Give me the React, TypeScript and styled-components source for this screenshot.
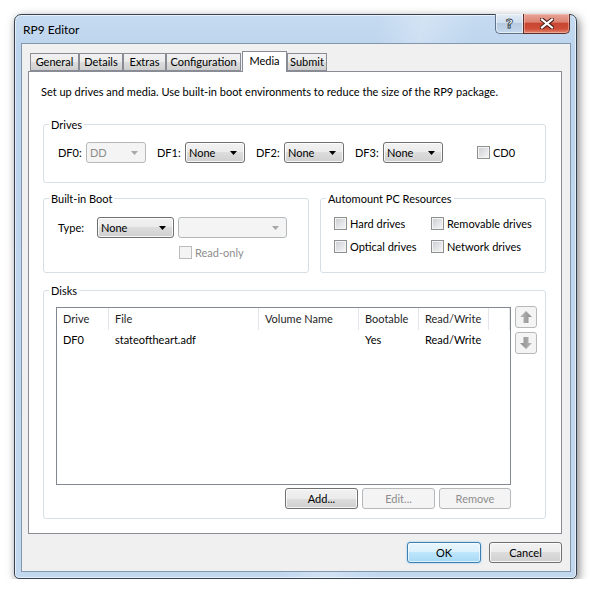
import React from 'react';
import styled, { createGlobalStyle } from 'styled-components';

const Global = createGlobalStyle`
  html, body { margin: 0; padding: 0; background: #ffffff; }
  body {
    font-family: Lato, "Liberation Sans", sans-serif;
    font-size: 11px;
    color: #000;
  }
`;

const Page = styled.div`
  padding: 14px 0 0 14px;
`;

const Frame = styled.div`
  width: 563px;
  height: 565px;
  box-sizing: border-box;
  border: 1px solid #34414f;
  border-radius: 7px 7px 5px 5px;
  background:
    linear-gradient(100deg, rgba(255,255,255,0) 55%, rgba(255,255,255,0.25) 62%, rgba(255,255,255,0) 70%),
    linear-gradient(to bottom, #c6dbf1 0%, #bcd4ed 6%, #c2d8ef 100%);
  box-shadow: 2px 3px 10px rgba(0, 0, 0, 0.5), inset 0 0 0 1px rgba(255, 255, 255, 0.6);
  padding: 0 5px 6px 6px;
  display: flex;
  flex-direction: column;
`;

const TitleBar = styled.div`
  height: 28px;
  flex: none;
  display: flex;
  align-items: center;
  padding: 0 1px 0 2px;
`;

const Title = styled.div`
  flex: 1;
  font-size: 12px;
  color: #000;
  line-height: 15px;
`;

const CaptionButtons = styled.div`
  align-self: flex-start;
  display: flex;
  margin-top: -1px;
`;

const HelpButton = styled.div`
  width: 28px;
  height: 20px;
  box-sizing: border-box;
  border: 1px solid #5f7286;
  border-top: none;
  border-right: none;
  border-radius: 0 0 0 5px;
  background: linear-gradient(#e3ecf6 0%, #cfdeee 45%, #b7cbe0 50%, #c5d8ec 100%);
  box-shadow: inset 0 0 0 1px rgba(255, 255, 255, 0.55);
  display: flex;
  align-items: center;
  justify-content: center;
  font-family: "DejaVu Sans", sans-serif;
  font-weight: bold;
  font-size: 13px;
  color: #fff;
  -webkit-text-stroke: 0.8px #2d3a48;
`;

const CloseButton = styled.div`
  width: 47px;
  height: 20px;
  box-sizing: border-box;
  border: 1px solid #5e2f2a;
  border-top: none;
  border-radius: 0 0 5px 0;
  background: linear-gradient(#e8a497 0%, #dc8373 42%, #c84631 50%, #cf4e38 78%, #e28875 100%);
  box-shadow: inset 0 0 0 1px rgba(255, 210, 200, 0.45);
  display: flex;
  align-items: center;
  justify-content: center;
`;

const Client = styled.div`
  flex: 1;
  background: #f0f0f0;
  border: 1px solid #8396ab;
  padding: 7px 8px 8px 6px;
  display: flex;
  flex-direction: column;
`;

const TabStrip = styled.div`
  height: 20px;
  flex: none;
  display: flex;
  align-items: flex-end;
  padding-left: 2px;
`;

const Tab = styled.div<{ $w: number; $active?: boolean }>`
  width: ${(p) => p.$w}px;
  height: ${(p) => (p.$active ? 21 : 18)}px;
  box-sizing: border-box;
  border: 1px solid #898c95;
  border-bottom: ${(p) => (p.$active ? 'none' : '1px solid #898c95')};
  margin-left: ${(p) => (p.$active ? 1 : 0)}px;
  margin-bottom: ${(p) => (p.$active ? -1 : 0)}px;
  position: relative;
  z-index: ${(p) => (p.$active ? 1 : 0)};
  background: ${(p) =>
    p.$active ? '#ffffff' : 'linear-gradient(#f2f2f2 0%, #ebebeb 50%, #dddddd 50%, #cfcfcf 100%)'};
  text-align: center;
  line-height: ${(p) => (p.$active ? 18 : 16)}px;
  white-space: nowrap;
`;

const Panel = styled.div`
  height: 463px;
  flex: none;
  box-sizing: border-box;
  border: 1px solid #898c95;
  background: #fff;
  padding: 0 15px 0 14px;
  display: flex;
  flex-direction: column;
`;

const Description = styled.div`
  margin: 12px 0 0 -2px;
  line-height: 15px;
  white-space: nowrap;
`;

const Group = styled.div<{ $h: number; $mt: number }>`
  position: relative;
  height: ${(p) => p.$h}px;
  margin-top: ${(p) => p.$mt}px;
  box-sizing: border-box;
  border: 1px solid #d5dfe5;
  border-radius: 3px;
`;

const Legend = styled.span`
  position: absolute;
  top: -8px;
  left: 5px;
  padding: 0 2px;
  background: #fff;
  line-height: 15px;
`;

const DrivesRow = styled.div`
  display: flex;
  align-items: center;
  padding: 17px 0 0 14px;
  height: 21px;
`;

const DriveField = styled.div`
  display: flex;
  align-items: center;
  margin-right: 11px;
`;

const FieldLabel = styled.span<{ $w: number }>`
  width: ${(p) => p.$w}px;
  line-height: 21px;
  white-space: nowrap;
`;

const ComboBox = styled.div<{ $w: number; $disabled?: boolean }>`
  width: ${(p) => p.$w}px;
  height: 21px;
  box-sizing: border-box;
  border: 1px solid ${(p) => (p.$disabled ? '#b5b9bc' : '#707070')};
  border-radius: 3px;
  background: ${(p) =>
    p.$disabled ? '#f4f4f4' : 'linear-gradient(#f2f2f2 0%, #ebebeb 50%, #dddddd 50%, #cfcfcf 100%)'};
  box-shadow: inset 0 0 0 1px ${(p) => (p.$disabled ? '#f4f4f4' : 'rgba(255,255,255,0.8)')};
  display: flex;
  align-items: center;
  padding: 0 7px 0 3px;
  color: ${(p) => (p.$disabled ? '#8d8d8d' : '#000')};
  white-space: nowrap;
`;

const ComboText = styled.span`
  flex: 1;
  line-height: 15px;
`;

const CheckRow = styled.label<{ $ml?: number; $disabled?: boolean }>`
  display: flex;
  align-items: center;
  gap: 3px;
  margin-left: ${(p) => p.$ml ?? 0}px;
  color: ${(p) => (p.$disabled ? '#8d8d8d' : '#000')};
  white-space: nowrap;
  line-height: 13px;
`;

const CheckBox = styled.span<{ $disabled?: boolean }>`
  width: 13px;
  height: 13px;
  flex: none;
  box-sizing: border-box;
  border: 1px solid ${(p) => (p.$disabled ? '#bcbcbc' : '#8e8f8f')};
  background: ${(p) =>
    p.$disabled ? '#f4f4f4' : 'linear-gradient(135deg, #c9ccd1 0%, #e3e4e6 55%, #f7f7f7 100%)'};
  box-shadow: inset 0 0 0 1px #f4f4f4;
`;

const BootRow = styled.div`
  display: flex;
  gap: 11px;
  margin-top: 15px;
`;

const BootGrid = styled.div`
  display: grid;
  grid-template-columns: 35px 77px 109px;
  column-gap: 4px;
  row-gap: 8px;
  padding: 18px 0 0 14px;
  align-items: center;
`;

const AutoGrid = styled.div`
  display: grid;
  grid-template-columns: 97px auto;
  row-gap: 10px;
  padding: 18px 0 0 13px;
`;

const DisksGrid = styled.div`
  display: grid;
  grid-template-columns: 455px 22px;
  grid-template-rows: 178px 21px;
  column-gap: 4px;
  row-gap: 3px;
  padding: 16px 0 0 12px;
`;

const ListView = styled.div`
  box-sizing: border-box;
  border: 1px solid #828790;
  background: #fff;
  overflow: hidden;
`;

const ListRow = styled.div<{ $header?: boolean }>`
  display: flex;
  height: ${(p) => (p.$header ? 22 : 19)}px;
  line-height: ${(p) => (p.$header ? 22 : 19)}px;
  color: ${(p) => (p.$header ? '#1e1e1e' : '#000')};
`;

const Cell = styled.div<{ $w: number; $header?: boolean }>`
  width: ${(p) => p.$w}px;
  flex: none;
  box-sizing: border-box;
  padding-left: 6px;
  border-right: ${(p) => (p.$header ? '1px solid #e3e6ea' : 'none')};
  white-space: nowrap;
  overflow: hidden;
`;

const ArrowColumn = styled.div`
  display: flex;
  flex-direction: column;
  gap: 4px;
  margin-top: -1px;
`;

const ArrowButton = styled.div`
  width: 22px;
  height: 22px;
  box-sizing: border-box;
  border: 1px solid #b5b9bc;
  border-radius: 3px;
  background: #f4f4f4;
  display: flex;
  align-items: center;
  justify-content: center;
`;

const ListButtons = styled.div`
  display: flex;
  justify-content: flex-end;
  gap: 4px;
`;

const PushButton = styled.div<{ $w: number; $disabled?: boolean; $default?: boolean }>`
  width: ${(p) => p.$w}px;
  height: 21px;
  box-sizing: border-box;
  border: 1px solid ${(p) => (p.$default ? '#3c7fb1' : p.$disabled ? '#b5b9bc' : '#707070')};
  border-radius: 3px;
  background: ${(p) =>
    p.$default
      ? 'linear-gradient(#eaf6fd 0%, #d9f0fc 50%, #bee6fd 50%, #a7d9f5 100%)'
      : p.$disabled
      ? '#f4f4f4'
      : 'linear-gradient(#f2f2f2 0%, #ebebeb 50%, #dddddd 50%, #cfcfcf 100%)'};
  box-shadow: ${(p) =>
    p.$default
      ? 'inset 0 0 0 1px rgba(255,255,255,0.6), 0 0 2px rgba(60,160,230,0.6)'
      : p.$disabled
      ? 'inset 0 0 0 1px #f4f4f4'
      : 'inset 0 0 0 1px rgba(255,255,255,0.8)'};
  color: ${(p) => (p.$disabled ? '#8d8d8d' : '#000')};
  display: flex;
  align-items: center;
  justify-content: center;
  line-height: 15px;
  white-space: nowrap;
`;

const DialogButtons = styled.div`
  display: flex;
  justify-content: flex-end;
  gap: 8px;
  margin-top: 8px;
`;

const DropArrow = ({ disabled }: { disabled?: boolean }) => (
  <svg width="7" height="4" viewBox="0 0 7 4">
    <polygon points="0,0 7,0 3.5,4" fill={disabled ? '#a8a8a8' : '#000'} />
  </svg>
);

const Combo = ({ w, text, disabled }: { w: number; text?: string; disabled?: boolean }) => (
  <ComboBox $w={w} $disabled={disabled}>
    <ComboText>{text}</ComboText>
    <DropArrow disabled={disabled} />
  </ComboBox>
);

const Check = ({ label, ml, disabled }: { label: string; ml?: number; disabled?: boolean }) => (
  <CheckRow $ml={ml} $disabled={disabled}>
    <CheckBox $disabled={disabled} />
    {label}
  </CheckRow>
);

const BlockArrow = ({ down }: { down?: boolean }) => (
  <svg width="14" height="14" viewBox="0 0 14 14">
    <defs>
      <linearGradient id={down ? 'ad' : 'au'} x1="0" y1="0" x2="1" y2="0">
        <stop offset="0" stopColor="#b9b9b9" />
        <stop offset="1" stopColor="#8c8c8c" />
      </linearGradient>
    </defs>
    <g transform={down ? 'rotate(180 7 7)' : undefined}>
      <path d="M7 1 L13 7 L9.5 7 L9.5 13 L4.5 13 L4.5 7 L1 7 Z" fill={`url(#${down ? 'ad' : 'au'})`} />
    </g>
  </svg>
);

const CloseGlyph = () => (
  <svg width="14" height="11" viewBox="0 0 14 11">
    <path d="M2 1.5 L12 9.5 M12 1.5 L2 9.5" stroke="#4a1c16" strokeWidth="4.2" strokeLinecap="square" />
    <path d="M2 1.5 L12 9.5 M12 1.5 L2 9.5" stroke="#ffffff" strokeWidth="2.2" strokeLinecap="square" />
  </svg>
);

const tabs: { label: string; w: number; active?: boolean }[] = [
  { label: 'General', w: 49 },
  { label: 'Details', w: 44 },
  { label: 'Extras', w: 43 },
  { label: 'Configuration', w: 75 },
  { label: 'Media', w: 45, active: true },
  { label: 'Submit', w: 40 },
];

const columns = [
  { label: 'Drive', w: 52 },
  { label: 'File', w: 150 },
  { label: 'Volume Name', w: 100 },
  { label: 'Bootable', w: 60 },
  { label: 'Read/Write', w: 70 },
  { label: '', w: 21 },
];

const rows = [['DF0', 'stateoftheart.adf', '', 'Yes', 'Read/Write', '']];

export default function App() {
  return (
    <>
      <Global />
      <Page>
        <Frame>
          <TitleBar>
            <Title>RP9 Editor</Title>
            <CaptionButtons>
              <HelpButton>?</HelpButton>
              <CloseButton>
                <CloseGlyph />
              </CloseButton>
            </CaptionButtons>
          </TitleBar>
          <Client>
            <TabStrip>
              {tabs.map((t) => (
                <Tab key={t.label} $w={t.w} $active={t.active}>
                  {t.label}
                </Tab>
              ))}
            </TabStrip>
            <Panel>
              <Description>
                Set up drives and media. Use built-in boot environments to reduce the size of the RP9 package.
              </Description>

              <Group $h={59} $mt={25}>
                <Legend>Drives</Legend>
                <DrivesRow>
                  <DriveField>
                    <FieldLabel $w={28}>DF0:</FieldLabel>
                    <Combo w={60} text="DD" disabled />
                  </DriveField>
                  <DriveField>
                    <FieldLabel $w={28}>DF1:</FieldLabel>
                    <Combo w={60} text="None" />
                  </DriveField>
                  <DriveField>
                    <FieldLabel $w={28}>DF2:</FieldLabel>
                    <Combo w={60} text="None" />
                  </DriveField>
                  <DriveField>
                    <FieldLabel $w={28}>DF3:</FieldLabel>
                    <Combo w={60} text="None" />
                  </DriveField>
                  <Check label="CD0" ml={23} />
                </DrivesRow>
              </Group>

              <BootRow>
                <Group $h={75} $mt={0} style={{ width: 266 }}>
                  <Legend>Built-in Boot</Legend>
                  <BootGrid>
                    <FieldLabel $w={35}>Type:</FieldLabel>
                    <Combo w={77} text="None" />
                    <Combo w={109} disabled />
                    <span />
                    <span />
                    <Check label="Read-only" ml={1} disabled />
                  </BootGrid>
                </Group>
                <Group $h={75} $mt={0} style={{ flex: 1 }}>
                  <Legend>Automount PC Resources</Legend>
                  <AutoGrid>
                    <Check label="Hard drives" />
                    <Check label="Removable drives" />
                    <Check label="Optical drives" />
                    <Check label="Network drives" />
                  </AutoGrid>
                </Group>
              </BootRow>

              <Group $h={229} $mt={17}>
                <Legend>Disks</Legend>
                <DisksGrid>
                  <ListView>
                    <ListRow $header>
                      {columns.map((c, i) => (
                        <Cell key={i} $w={c.w} $header>
                          {c.label}
                        </Cell>
                      ))}
                    </ListRow>
                    {rows.map((r, ri) => (
                      <ListRow key={ri}>
                        {r.map((v, ci) => (
                          <Cell key={ci} $w={columns[ci].w}>
                            {v}
                          </Cell>
                        ))}
                      </ListRow>
                    ))}
                  </ListView>
                  <ArrowColumn>
                    <ArrowButton>
                      <BlockArrow />
                    </ArrowButton>
                    <ArrowButton>
                      <BlockArrow down />
                    </ArrowButton>
                  </ArrowColumn>
                  <ListButtons>
                    <PushButton $w={73}>Add...</PushButton>
                    <PushButton $w={73} $disabled>
                      Edit...
                    </PushButton>
                    <PushButton $w={72} $disabled>
                      Remove
                    </PushButton>
                  </ListButtons>
                </DisksGrid>
              </Group>
            </Panel>
            <DialogButtons>
              <PushButton $w={74} $default>
                OK
              </PushButton>
              <PushButton $w={73}>Cancel</PushButton>
            </DialogButtons>
          </Client>
        </Frame>
      </Page>
    </>
  );
}
